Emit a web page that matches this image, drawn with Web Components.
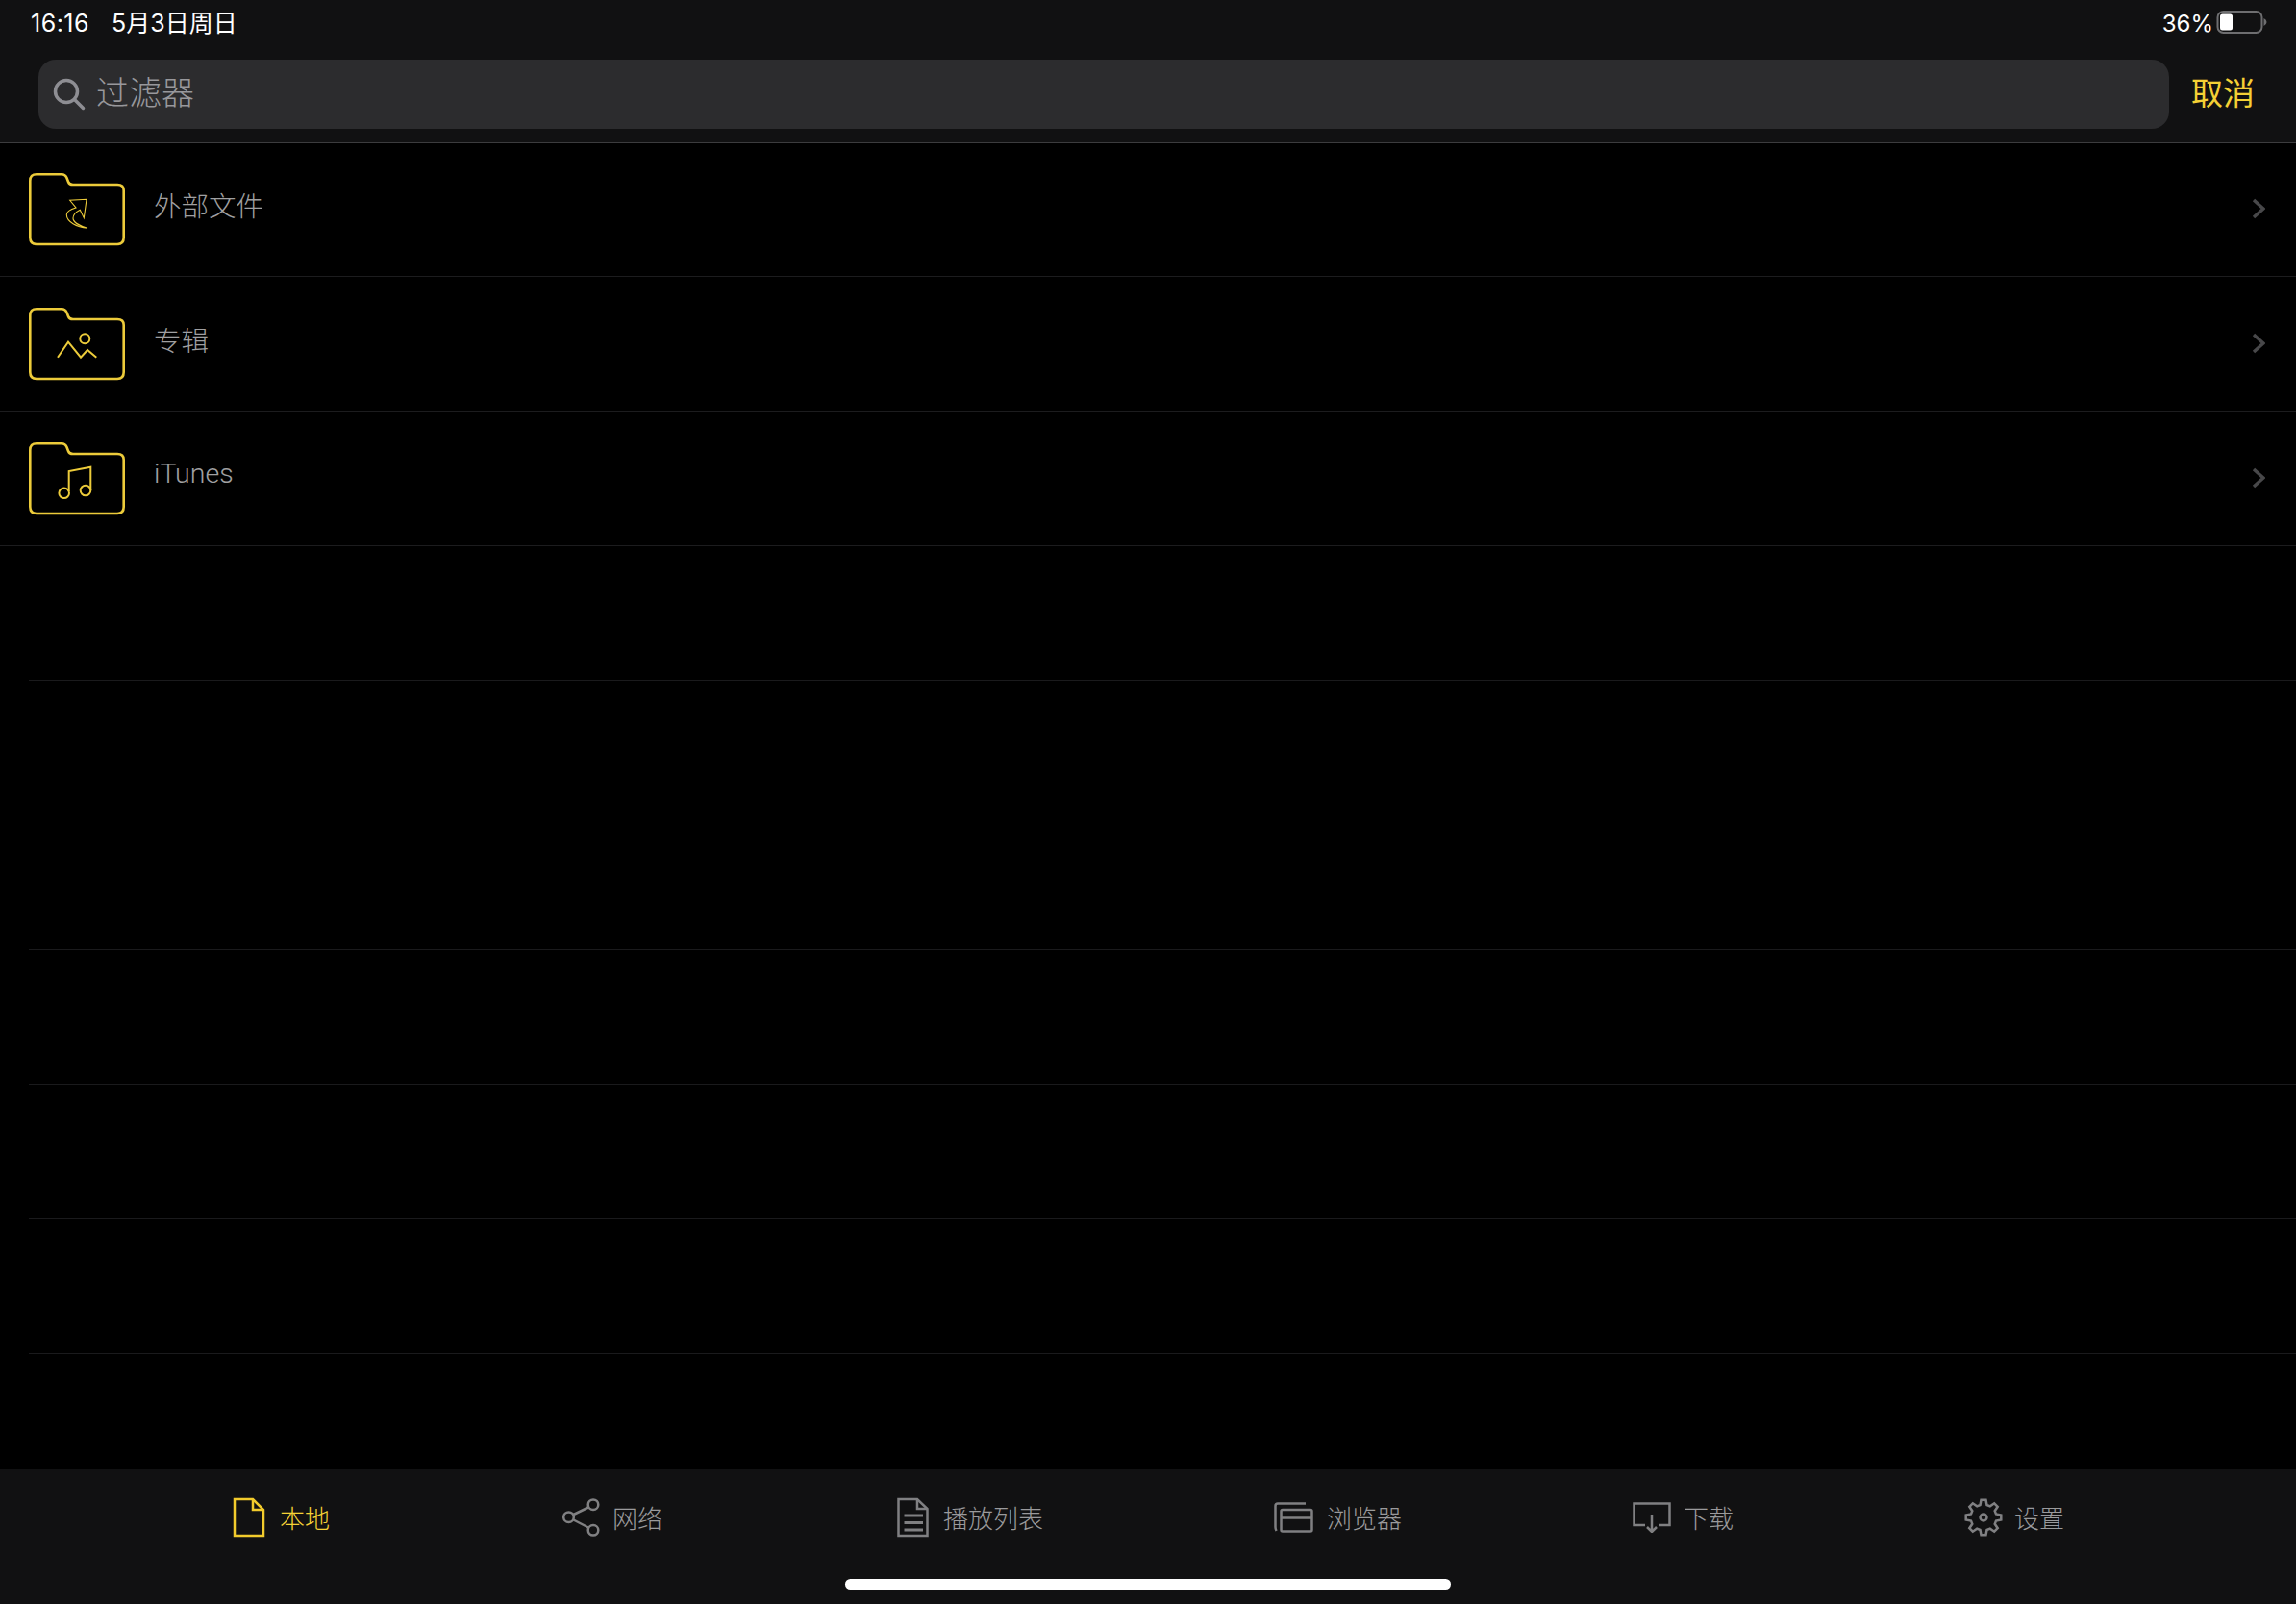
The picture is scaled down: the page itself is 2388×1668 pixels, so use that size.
<!DOCTYPE html>
<html lang="zh">
<head>
<meta charset="utf-8">
<title>本地</title>
<style>
    html, body { margin: 0; height: 100%; background: #000; }
    body { font-family: Inter, "Noto Sans CJK SC", sans-serif; }
    main { display: flex; flex-direction: column; height: 1668px; overflow: hidden; }
</style>
</head>
<body>
<main>
    <status-bar time="16:16" date="5月3日周日" level="36%"></status-bar>
    <search-bar placeholder="过滤器" action="取消"></search-bar>
    <file-list>
        <list-row label="外部文件" icon="external"></list-row>
        <list-row label="专辑" icon="album"></list-row>
        <list-row label="iTunes" icon="music"></list-row>
        <list-row></list-row>
        <list-row></list-row>
        <list-row></list-row>
        <list-row></list-row>
        <list-row></list-row>
        <list-row></list-row>
    </file-list>
    <tab-bar>
        <tab-item label="本地" icon="file" active style="--left:0px;--gap:15px"></tab-item>
        <tab-item label="网络" icon="share" style="--left:242px;--gap:13px"></tab-item>
        <tab-item label="播放列表" icon="playlist" style="--left:244px;--gap:15px"></tab-item>
        <tab-item label="浏览器" icon="browser" style="--left:240px;--gap:14px"></tab-item>
        <tab-item label="下载" icon="download" style="--left:240px;--gap:13px"></tab-item>
        <tab-item label="设置" icon="gear" style="--left:240px;--gap:12px"></tab-item>
    </tab-bar>
</main>

<script>
const CJK = 'Inter, "Noto Sans CJK SC", sans-serif';
const ROBOTO = 'Roboto, "Noto Sans CJK SC", sans-serif';

class StatusBar extends HTMLElement {
    connectedCallback() {
        const root = this.attachShadow({mode: 'open'});
        root.innerHTML = `
            <style>
                :host { display: flex; align-items: baseline; height: 46px; padding: 0 30px 0 32px; box-sizing: border-box; background: #111112; color: #fff; font: 400 25px/32px ${CJK}; }
                .time { padding-top: 8px; letter-spacing: .5px; }
                .date { margin-left: 23px; }
                .level { font-size: 24px; }
                .spacer { flex: 1; }
                svg { display: block; margin-left: 3px; align-self: center; }
            </style>
            <span class="time">${this.getAttribute('time')}</span>
            <span class="date">${this.getAttribute('date')}</span>
            <span class="spacer"></span>
            <span class="level">${this.getAttribute('level')}</span>
            <svg width="53" height="26" viewBox="0 0 53 26">
                <rect x="1.5" y="2" width="46" height="22" rx="6" fill="none" stroke="#6e6e70" stroke-width="2"/>
                <rect x="4" y="4.5" width="13" height="17" rx="2.5" fill="#fff"/>
                <path d="M49.5 9 q3 1.500 3 4 t-3 4 z" fill="#6e6e70"/>
            </svg>`;
    }
}

class SearchBar extends HTMLElement {
    connectedCallback() {
        const root = this.attachShadow({mode: 'open'});
        root.innerHTML = `
            <style>
                :host { display: flex; align-items: flex-start; height: 103px; padding: 16px 43px 0 40px; box-sizing: border-box; background: #111112; border-bottom: 1px solid #3c3c3e; font-family: ${CJK}; }
                .box { flex: 1; display: flex; align-items: center; gap: 11px; height: 72px; padding-left: 15px; border-radius: 18px; background: #2c2c2e; color: #98989c; font-size: 34px; font-weight: 300; }
                .box svg { display: block; }
                .box span { padding-bottom: 7px; }
                .action { margin-left: 23px; line-height: 70px; color: #f4d035; font-size: 33px; }
            </style>
            <div class="box">
                <svg width="34" height="36" viewBox="0 0 34 36" fill="none" stroke="#8e8e93" stroke-width="3.5" stroke-linecap="round">
                    <circle cx="14" cy="15" r="11.500"/>
                    <path d="M22.500 23.500 L31.500 32.500"/>
                </svg>
                <span>${this.getAttribute('placeholder')}</span>
            </div>
            <span class="action">${this.getAttribute('action')}</span>`;
    }
}

class FileList extends HTMLElement {
    connectedCallback() {
        const root = this.attachShadow({mode: 'open'});
        root.innerHTML = `
            <style>
                :host { display: flex; flex-direction: column; flex: 1; margin-top: -1px; }
            </style>
            <slot></slot>`;
    }
}

const FOLDER = 'M8 1.300 H34 Q38 1.300 39.500 5 L41 9 Q42 12 46 12 H92 Q98.700 12 98.700 18 V67 Q98.700 74 92 74 H8 Q1.300 74 1.300 67 V8 Q1.300 1.300 8 1.300 Z';
const GLYPHS = {
    external: '<path stroke-width="1.100" d="M61 57.300 C50 56 39.300 51 39.300 43.300 C39.300 40 44 37.500 49 36 L42.700 28.300 L60 27.300 L57.300 46.700 L53.300 38.300 C48 41 46 44 46 47 C46 51 53 55 61 57.300 Z"/>',
    album: '<path d="M30 51.700 L41 35.700 L54 51.700 L61 44 L70.300 51.700"/><circle cx="58.300" cy="32.300" r="5"/>',
    music: '<circle cx="36.700" cy="52.700" r="5.300"/><circle cx="59" cy="50" r="5.300"/><path d="M41.700 51 V30 L64.300 25.700 V50"/>'
};

class ListRow extends HTMLElement {
    connectedCallback() {
        const root = this.attachShadow({mode: 'open'});
        const label = this.getAttribute('label');
        const icon = this.getAttribute('icon');
        root.innerHTML = `
            <style>
                :host { display: block; height: 140px; box-sizing: border-box; }
                .row { display: flex; align-items: center; height: 140px; padding: 0 32px 0 30px; box-sizing: border-box; color: #a0a0a2; border-bottom: 1px solid #1c1c1e; font: 300 28.5px ${ROBOTO}; }
                .label { margin-left: 30px; padding-bottom: 10px; flex: 1; }
                .chevron { margin-bottom: 2px; }
                .empty { height: 140px; box-sizing: border-box; margin-left: 30px; border-bottom: 1px solid #1a1a1c; }
                svg { display: block; }
            </style>
            ${label ? `
            <div class="row">
                <svg width="100" height="76" viewBox="0 0 100 76" fill="none" stroke="#eccb3a" stroke-width="2.600">
                    <path d="${FOLDER}"/>
                    <g stroke-width="2">${GLYPHS[icon]}</g>
                </svg>
                <span class="label">${label}</span>
                <svg class="chevron" width="14" height="22" viewBox="0 0 14 22" fill="none" stroke="#48484a" stroke-width="3.500">
                    <path d="M2 2 L12 11 L2 20"/>
                </svg>
            </div>` : '<div class="empty"></div>'}`;
    }
}

function gearPath(cx, cy, outer, inner, teeth) {
    const pts = [];
    const step = Math.PI * 2 / teeth;
    for (let i = 0; i < teeth; i++) {
        const a = i * step - Math.PI / 2;
        const w = step * 0.17;
        const v = step * 0.33;
        [[-v, inner], [-w, outer], [w, outer], [v, inner]].forEach(([d, r]) => {
            pts.push((cx + Math.cos(a + d) * r).toFixed(1) + ' ' + (cy + Math.sin(a + d) * r).toFixed(1));
        });
    }
    return 'M' + pts.join(' L') + ' Z';
}

const TAB_ICONS = {
    file: [34, 42, '<path d="M2 2 H21 L32 13 V40 H2 Z"/><path d="M21 2 V13 H32"/>'],
    share: [39, 42, '<circle cx="32" cy="7.700" r="5.300"/><circle cx="6.500" cy="20.700" r="5.300"/><circle cx="32" cy="34.300" r="5.300"/><path d="M11.500 18 L27 10.500 M11.500 23.500 L27 31.500"/>'],
    playlist: [33, 42, '<path d="M1.500 2 H21 L31.500 12 V40 H1.500 Z"/><path d="M21 2 V12 H31.500"/><path stroke-width="3" d="M7.500 19 H27 M7.500 26.500 H27 M7.500 34 H27"/>'],
    browser: [41, 32, '<path d="M2.500 30 Q1.500 28 1.500 26 V4 Q1.500 1.500 4 1.500 H33"/><rect x="7.500" y="8" width="32" height="22.500" rx="1.500"/><path d="M7.500 16.500 H39.500"/>'],
    download: [40, 32, '<path d="M13 24 H1.500 V1.500 H38.500 V24 H27"/><path d="M20 13 V31 M15 26 L20 31 L25 26"/>'],
    gear: [40, 40, '<path d="' + gearPath(20, 20, 18.5, 13.5, 8) + '"/><circle cx="20" cy="20" r="3.500"/>']
};

class TabItem extends HTMLElement {
    connectedCallback() {
        const root = this.attachShadow({mode: 'open'});
        const [w, h, body] = TAB_ICONS[this.getAttribute('icon')];
        const colour = this.hasAttribute('active') ? '#f6d236' : '#9a9a9c';
        const stroke = this.hasAttribute('active') ? '#f2cb2c' : '#808082';
        root.innerHTML = `
            <style>
                :host { display: flex; align-items: center; gap: var(--gap); height: 42px; margin-left: var(--left); color: ${colour}; font: 300 26px ${CJK}; }
                svg { display: block; }
                span { padding-bottom: 2px; }
            </style>
            <svg width="${w}" height="${h}" viewBox="0 0 ${w} ${h}" fill="none" stroke="${stroke}" stroke-width="2.500">${body}</svg>
            <span>${this.getAttribute('label')}</span>`;
    }
}

class TabBar extends HTMLElement {
    connectedCallback() {
        const root = this.attachShadow({mode: 'open'});
        root.innerHTML = `
            <style>
                :host { position: relative; display: flex; align-items: flex-start; flex: none; height: 140px; padding: 29px 0 0 242px; box-sizing: border-box; background: #111112; }
                .home { position: absolute; left: 879px; top: 114px; width: 630px; height: 11px; border-radius: 6px; background: #fff; }
            </style>
            <slot></slot>
            <div class="home"></div>`;
    }
}

customElements.define('status-bar', StatusBar);
customElements.define('search-bar', SearchBar);
customElements.define('file-list', FileList);
customElements.define('list-row', ListRow);
customElements.define('tab-item', TabItem);
customElements.define('tab-bar', TabBar);
</script>
</body>
</html>
